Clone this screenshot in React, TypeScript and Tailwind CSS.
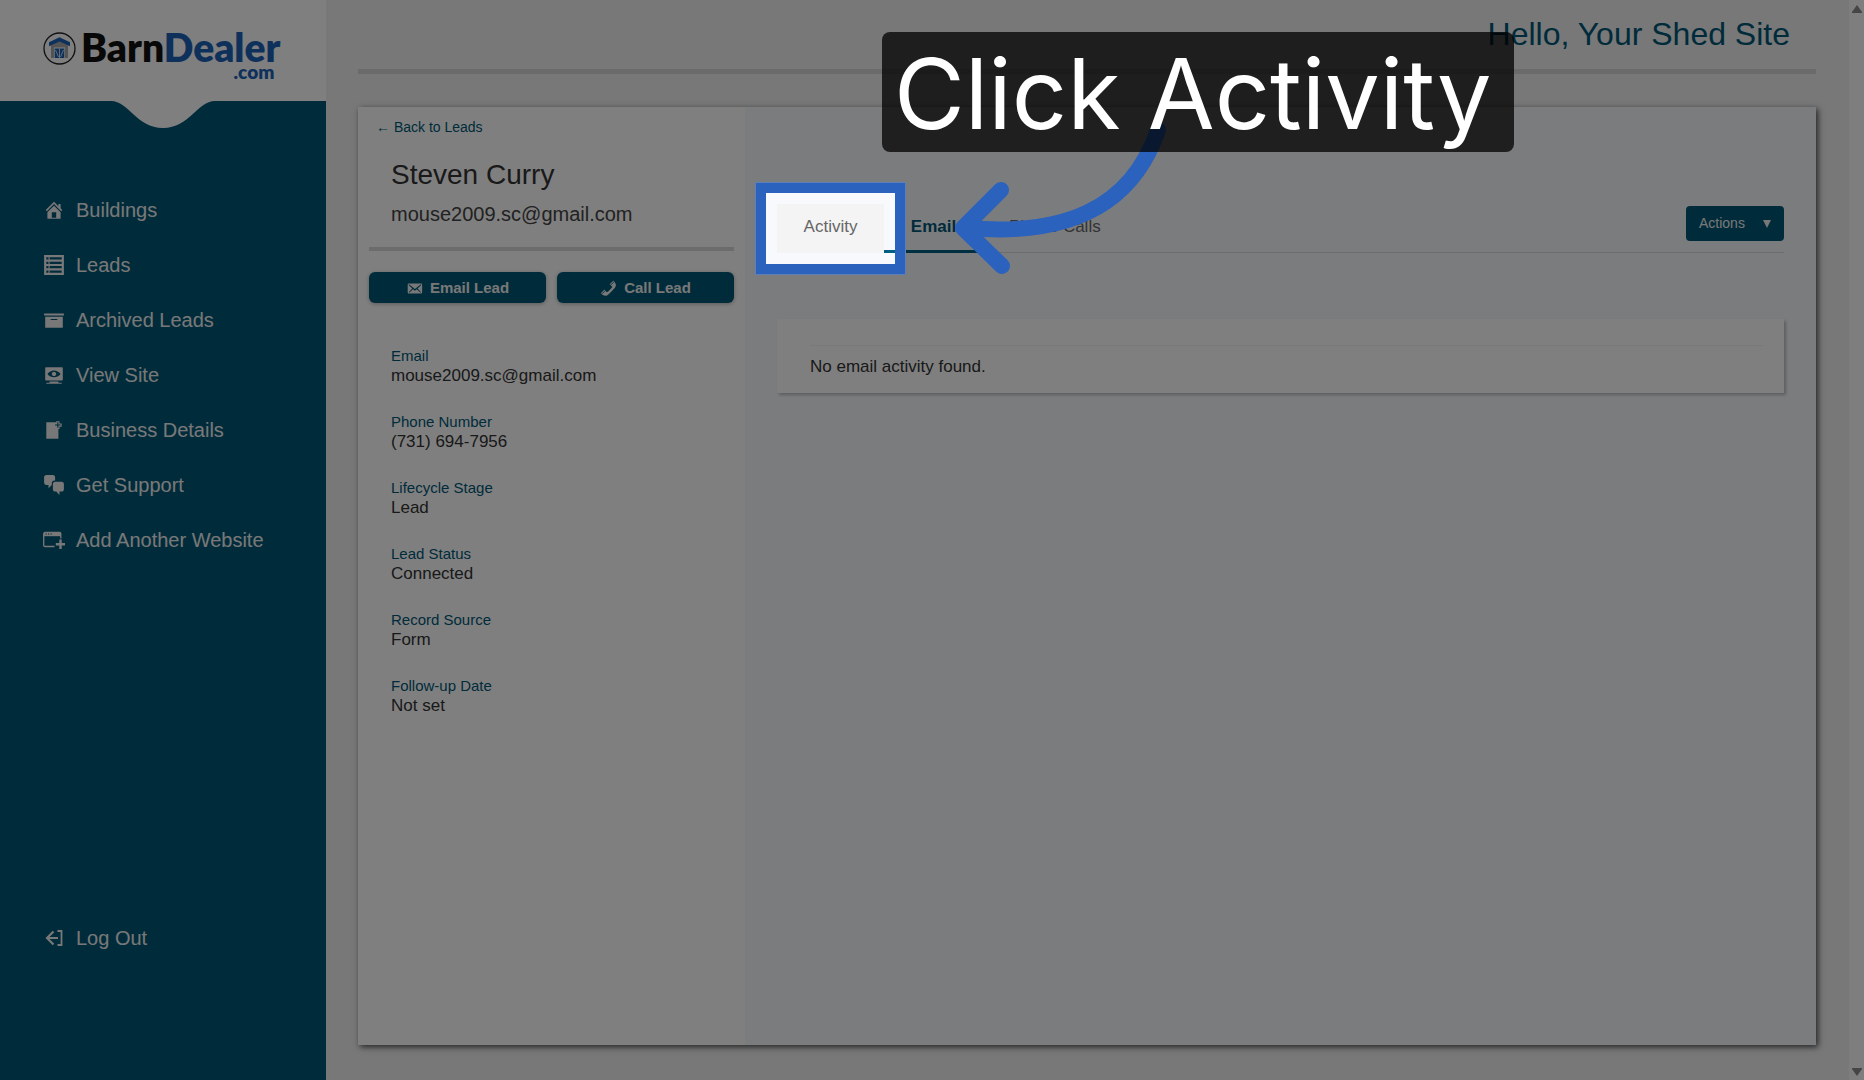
import type { ReactNode } from 'react';

interface NavItem {
  label: string;
  icon: ReactNode;
}

interface LeadField {
  label: string;
  value: string;
}

/**
 * 20-unit glyph used by the sidebar and the lead buttons
 */
function Glyph({ d, className = 'size-[22px]' }: { d: string; className?: string }) {
  return (
    <svg className={className} viewBox="0 0 20 20" fill="currentColor" aria-hidden="true">
      <path fillRule="evenodd" d={d} />
    </svg>
  );
}

const EMAIL_PATH =
  'M19 14.5v-9c0-.83-.67-1.5-1.5-1.5H3.49c-.83 0-1.5.67-1.5 1.5v9c0 .83.67 1.5 1.5 1.5H17.5c.83 0 1.5-.67 1.5-1.5zm-1.31-9.11c.33.33.15.67-.03.84L13.6 9.95l3.9 4.06c.12.14.2.36.06.51-.13.16-.43.15-.56.05l-4.37-3.73-2.14 1.95-2.13-1.95-4.37 3.73c-.13.1-.43.11-.56-.05-.14-.15-.06-.37.06-.51l3.9-4.06-4.06-3.72c-.18-.17-.36-.51-.03-.84s.67-.17.95.07l6.24 5.04 6.25-5.04c.28-.24.62-.4.95-.07z';
const PHONE_PATH =
  'M12.06 6l-.21-.2c-.52-.54-.43-.79.08-1.3l2.72-2.75c.81-.82.96-1.21 1.73-.48l.21.2zm.53.45l4.4-4.4c.7.94 2.34 3.47 1.53 5.34-.73 1.67-1.09 1.75-2 3-1.85 2.11-4.18 4.37-6 6.07-1.26.91-1.31 1.33-3 2-1.8.71-4.4-.89-5.38-1.56l4.4-4.4 1.18 1.62c.34.46 1.2-.06 1.8-.66 1.04-1.05 3.18-3.18 4-4.07.59-.59 1.12-1.45.66-1.8zM1.57 16.5l-.21-.21c-.68-.74-.29-.9.52-1.7l2.74-2.72c.51-.49.75-.6 1.27-.11l.2.21z';

const NAV_ITEMS: NavItem[] = [
  {
    label: 'Buildings',
    icon: (
      <Glyph d="M16 8.5l1.53 1.53-1.06 1.06L10 4.6l-6.47 6.49-1.06-1.06L10 2.5l4 4v-2h2v4zm-6-2.46l6 5.99V18H4v-5.97zM12 17v-5H8v5h4z" />
    ),
  },
  {
    label: 'Leads',
    icon: (
      <Glyph d="M1 1h18v18H1zM3 3v2h2V3zM6 3v2h11V3zM3 7v2h2V7zM6 7v2h11V7zM3 11v2h2v-2zM6 11v2h11v-2zM3 15v2h2v-2zM6 15v2h11v-2z" />
    ),
  },
  {
    label: 'Archived Leads',
    icon: <Glyph d="M19 4v2H1V4h18zM2 7h16v10H2V7zm11 3V9H7v1h6z" />,
  },
  {
    label: 'View Site',
    icon: (
      <Glyph d="M18 14V4c0-.55-.45-1-1-1H3c-.55 0-1 .45-1 1v10c0 .55.45 1 1 1h14c.55 0 1-.45 1-1zm-8-8c2.3 0 4.4 1.14 6 3-1.6 1.86-3.7 3-6 3s-4.4-1.14-6-3c1.6-1.86 3.7-3 6-3zm2 3c0-1.1-.9-2-2-2s-2 .9-2 2 .9 2 2 2 2-.9 2-2zm2 8h3v1H3v-1h3v-1h8v1z" />
    ),
  },
  {
    label: 'Business Details',
    icon: (
      <Glyph d="M17 7V4h-2V2h-3v1H3v15h11V9h1V7h2zm-1-2v1h-2v2h-1V6h-2V5h2V3h1v2h2z" />
    ),
  },
  {
    label: 'Get Support',
    icon: (
      <Glyph d="M11 6h-.82C9.07 6 8 7.2 8 8.16V10l-3 3v-3H3c-1.1 0-2-.9-2-2V3c0-1.1.9-2 2-2h6c1.1 0 2 .9 2 2v3zm0 1h6c1.1 0 2 .9 2 2v5c0 1.1-.9 2-2 2h-2v3l-3-3h-1c-1.1 0-2-.9-2-2V9c0-1.1.9-2 2-2z" />
    ),
  },
  {
    label: 'Add Another Website',
    icon: (
      <svg className="size-[22px]" viewBox="0 0 22 22" fill="none" stroke="currentColor" aria-hidden="true">
        <path d="M17.8 9.5V4.8a1.3 1.3 0 0 0-1.3-1.3H2A1.3 1.3 0 0 0 .7 4.8v11.4A1.3 1.3 0 0 0 2 17.5h9.5" strokeWidth="1.3" />
        <path d="M1 5.5h17" strokeWidth="3.4" />
        <path d="M2.5 5h1.2M5 5h1.2M7.5 5h1.2" stroke="#005776" strokeWidth="1" />
        <path d="M17.5 10.5v9.5M12.8 15.3H22" strokeWidth="2.4" />
      </svg>
    ),
  },
];

const LEAD_FIELDS: LeadField[] = [
  { label: 'Email', value: 'mouse2009.sc@gmail.com' },
  { label: 'Phone Number', value: '(731) 694-7956' },
  { label: 'Lifecycle Stage', value: 'Lead' },
  { label: 'Lead Status', value: 'Connected' },
  { label: 'Record Source', value: 'Form' },
  { label: 'Follow-up Date', value: 'Not set' },
];

function Logo() {
  return (
    <a href="#" className="flex items-start gap-[5px] pl-[43px] pt-[31px] font-['Lato',sans-serif] font-extrabold">
      <svg className="mt-px size-[33px]" viewBox="0 0 33 33" aria-hidden="true">
        <circle cx="16.5" cy="16.5" r="15.5" fill="none" stroke="#222" strokeWidth="1.3" />
        <path d="M8 12.5l8.5-4 8.5 4V26h-3V15H11v11H8z" fill="#a9a9a9" />
        <path d="M10.5 13.5h12v2h-12z" fill="#a9a9a9" />
        <path d="M6 10.3l10.5-5 10.5 5v4L16.5 9.5 6 14.3z" fill="#1d63b8" />
        <path d="M11.7 16.5h9.6V26h-9.6z" fill="#1d63b8" />
        <path d="M16.5 16.5V26M12.5 18l3 7M20.5 18l-3 7" stroke="#c9d6e6" strokeWidth="1" />
      </svg>
      <span className="flex flex-col items-end">
        <span className="text-[39px] leading-8 text-[#111]">
          Barn<span className="text-[#1d63b8]">Dealer</span>
        </span>
        <span className="pr-[6px] text-[19px] leading-[18px] text-[#1d63b8]">.com</span>
      </span>
    </a>
  );
}

function Sidebar() {
  return (
    <aside className="flex w-[326px] shrink-0 flex-col bg-[#005776] text-[20px] text-[#f0f0f0]">
      <div className="h-[101px] bg-white">
        <Logo />
      </div>
      <svg className="mx-auto h-[27px] w-[104px] shrink-0" viewBox="0 0 106 27" preserveAspectRatio="none" aria-hidden="true">
        <path d="M0 0C18 0 26 27 53 27S88 0 106 0z" fill="#fff" />
      </svg>
      <nav className="flex flex-1 flex-col pb-[115px] pl-[43px] pt-[54px]">
        {NAV_ITEMS.map((item) => (
          <a key={item.label} href="#" className="flex h-[55px] items-center gap-[11px]">
            {item.icon}
            {item.label}
          </a>
        ))}
        <a href="#" className="mt-auto flex h-[55px] items-center gap-[11px]">
          <svg className="size-[22px]" viewBox="0 0 22 22" fill="none" stroke="currentColor" aria-hidden="true">
            <path d="M10.5 4.5L4 11l6.5 6.5M4 11h11" strokeWidth="2.2" />
            <path d="M14.5 4h4v14h-4" strokeWidth="1.8" />
          </svg>
          Log Out
        </a>
      </nav>
    </aside>
  );
}

function LeadPanel() {
  return (
    <section className="w-[387px] shrink-0 bg-white px-[11px] pt-[10px]">
      <a href="#" className="block pl-[7px] text-[14px] leading-5 text-[#005776]">
        ← Back to Leads
      </a>
      <div className="pl-[22px]">
        <h2 className="mt-[22px] text-[28px] leading-8 text-[#333]">Steven Curry</h2>
        <p className="mt-[11px] text-[20px] leading-6 text-[#444]">mouse2009.sc@gmail.com</p>
      </div>
      <hr className="mt-[21px] h-1 border-0 bg-[#d9d9d9]" />
      <div className="mt-[21px] grid grid-cols-2 gap-[11px] text-[15px] font-bold text-[#f0f0f0]">
        <button className="flex h-[31px] items-center justify-center gap-[7px] rounded-md bg-[#005776] pt-px shadow-[0_1px_4px_rgba(0,0,0,0.3)]">
          <Glyph d={EMAIL_PATH} className="size-[17px]" />
          Email Lead
        </button>
        <button className="flex h-[31px] items-center justify-center gap-[7px] rounded-md bg-[#005776] pt-px shadow-[0_1px_4px_rgba(0,0,0,0.3)]">
          <Glyph d={PHONE_PATH} className="size-[17px]" />
          Call Lead
        </button>
      </div>
      <dl className="mt-[43px] flex flex-col gap-[26px] pl-[22px] leading-5">
        {LEAD_FIELDS.map((field) => (
          <div key={field.label}>
            <dt className="text-[15px] text-[#005776]">{field.label}</dt>
            <dd className="text-[17px] text-[#333]">{field.value}</dd>
          </div>
        ))}
      </dl>
    </section>
  );
}

/**
 * Walkthrough callout: spotlight frame, arrow and caption, anchored to its parent
 */
function Callout({ text }: { text: string }) {
  return (
    <span className="pointer-events-none absolute inset-0 z-50">
      <span className="absolute -inset-[21px] border-10 border-[#2a62bd] shadow-[0_0_0_1px_#5f7fb8,0_0_0_4000px_rgba(0,0,0,0.5)]" />
      <svg className="absolute -top-[104px] left-[153px] h-[204px] w-[252px]" viewBox="930 100 252 204" fill="none" stroke="#2a62bd" strokeWidth="16" strokeLinecap="round" strokeLinejoin="round" aria-hidden="true">
        <path d="M1001 190L963 228l39 38" />
        <path d="M968 228C1060 236 1130 212 1158 130" />
      </svg>
      <span className="absolute -top-[172px] left-[105px] whitespace-nowrap rounded-lg bg-black/75 pl-3 pr-[22px] pt-1 font-['Inter',sans-serif] text-[97px] leading-[116px] text-white">
        {text}
      </span>
    </span>
  );
}

function ActivityPanel() {
  return (
    <section className="min-w-0 flex-1 bg-[#f7f9fc] px-8 pt-[97px]">
      <div className="flex items-start border-b border-[#d8dadd]">
        <nav className="-mb-px flex text-[17px] text-[#666]">
          <button className="relative h-[49px] w-[107px] bg-[#f4f4f4] pb-1">
            Activity
            <Callout text="Click Activity" />
          </button>
          <button className="h-[49px] w-[99px] border-b-3 border-[#005f82] pb-px font-bold text-[#005776]">
            Email
          </button>
          <button className="h-[49px] px-[26px] pb-1">Phone Calls</button>
        </nav>
        <button className="ml-auto mt-[2px] flex h-[35px] w-[98px] items-center justify-between rounded bg-[#005776] px-[13px] text-[14px] text-[#f0f0f0]">
          Actions
          <svg className="size-2" viewBox="0 0 8 8" fill="currentColor" aria-hidden="true">
            <path d="M0 0h8L4 8z" />
          </svg>
        </button>
      </div>
      <div className="mt-[66px] bg-white pb-4 pl-[33px] pr-[21px] pt-[26px] shadow-[2px_2px_3px_rgba(0,0,0,0.25)]">
        <hr className="border-[#f3f3f3]" />
        <p className="mt-[11px] text-[17px] leading-5 text-[#333]">No email activity found.</p>
      </div>
    </section>
  );
}

function ScrollRail() {
  return (
    <div className="flex w-[15px] shrink-0 flex-col items-center justify-between bg-[#fcfcfc] pb-1 pt-[5px] text-[#8a8a8a]" aria-hidden="true">
      <svg className="h-2 w-[10px]" viewBox="0 0 10 8" fill="currentColor">
        <path d="M5 0l5 7v1H0V7z" />
      </svg>
      <svg className="h-2 w-[10px]" viewBox="0 0 10 8" fill="currentColor">
        <path d="M5 8L0 1V0h10v1z" />
      </svg>
    </div>
  );
}

export default function App() {
  return (
    <div className="flex min-h-screen overflow-x-clip bg-[#f0f0f0] font-['Liberation_Sans',Arial,sans-serif]">
      <Sidebar />
      <main className="flex min-w-0 flex-1 flex-col pb-[35px] pl-8 pr-[33px]">
        <header className="border-b-5 border-[#d6d6d6] pb-[17px] pr-[26px] pt-4 text-right">
          <h1 className="text-[32px] leading-9 text-[#005776]">Hello, Your Shed Site</h1>
        </header>
        <div className="mt-[33px] flex flex-1 shadow-[2px_2px_6px_rgba(0,0,0,0.7)]">
          <LeadPanel />
          <ActivityPanel />
        </div>
      </main>
      <ScrollRail />
    </div>
  );
}
